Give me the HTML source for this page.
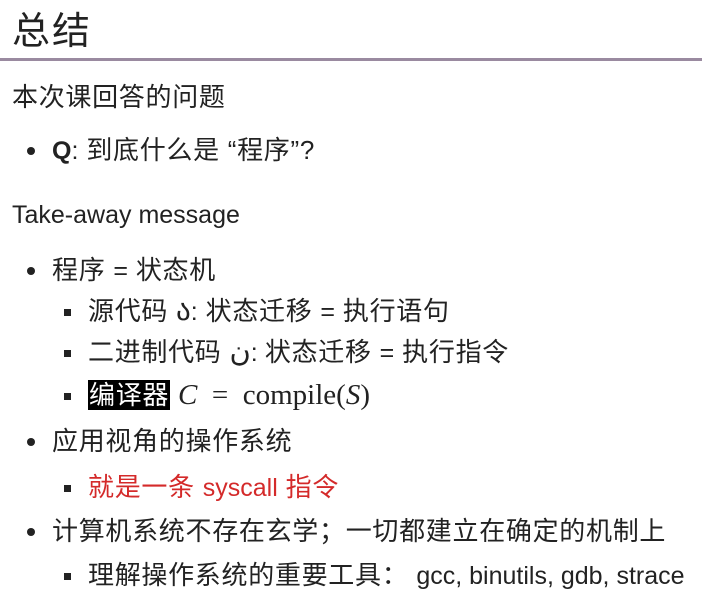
<!DOCTYPE html>
<html><head><meta charset="utf-8"><style>
body{margin:0;width:702px;height:596px;background:#fff;overflow:hidden;position:relative;font-family:"Liberation Sans","Noto Sans CJK SC",sans-serif;color:#222;}
.l{position:absolute;white-space:nowrap;font-size:26px;line-height:30px;letter-spacing:0.7px;}
.e{font-size:25px;letter-spacing:0;}
.t{position:absolute;left:12px;top:8px;font-size:38px;letter-spacing:2px;line-height:48px;}
.hr{position:absolute;left:0;top:58px;width:702px;height:3px;background:#9a8aa0;}
.b{position:absolute;width:8px;height:8px;border-radius:50%;background:#222;}
.s{position:absolute;width:7px;height:7px;background:#222;}
.m{font-family:"Liberation Serif",serif;font-size:29px;letter-spacing:0;}
</style></head><body>
<div class="t">总结</div>
<div class="hr"></div>
<div class="l" style="left:12px;top:82px">本次课回答的问题</div>
<div class="b" style="left:27px;top:147px"></div>
<div class="l" style="left:52px;top:135px"><b class="e">Q</b><span class="e">:</span> 到底什么是 “程序”?</div>
<div class="l e" style="left:12px;top:200px">Take-away message</div>
<div class="b" style="left:27px;top:267px"></div>
<div class="l" style="left:52px;top:255px">程序 <span class="e">=</span> 状态机</div>
<div class="s" style="left:64px;top:309px"></div>
<div class="l" style="left:88px;top:296px">源代码 <span class="m">ა</span><span class="e">:</span> 状态迁移 <span class="e">=</span> 执行语句</div>
<div class="s" style="left:64px;top:350px"></div>
<div class="l" style="left:88px;top:337px">二进制代码 <span class="m">ن</span><span class="e">:</span> 状态迁移 <span class="e">=</span> 执行指令</div>
<div class="s" style="left:64px;top:393px"></div>
<div class="l" style="left:88px;top:380px"><span style="background:#000;color:#fff;padding:0 1px">编译器</span> <span class="m"><i>C</i>&nbsp; = &nbsp;compile(<i>S</i>)</span></div>
<div class="b" style="left:27px;top:438px"></div>
<div class="l" style="left:52px;top:426px">应用视角的操作系统</div>
<div class="s" style="left:64px;top:485px"></div>
<div class="l" style="left:88px;top:472px;color:#d42a2a">就是一条 <span class="e">syscall</span> 指令</div>
<div class="b" style="left:27px;top:528px"></div>
<div class="l" style="left:52px;top:516px">计算机系统不存在玄学；一切都建立在确定的机制上</div>
<div class="s" style="left:64px;top:573px"></div>
<div class="l" style="left:88px;top:560px">理解操作系统的重要工具： <span class="e">gcc, binutils, gdb, strace</span></div>
</body></html>
